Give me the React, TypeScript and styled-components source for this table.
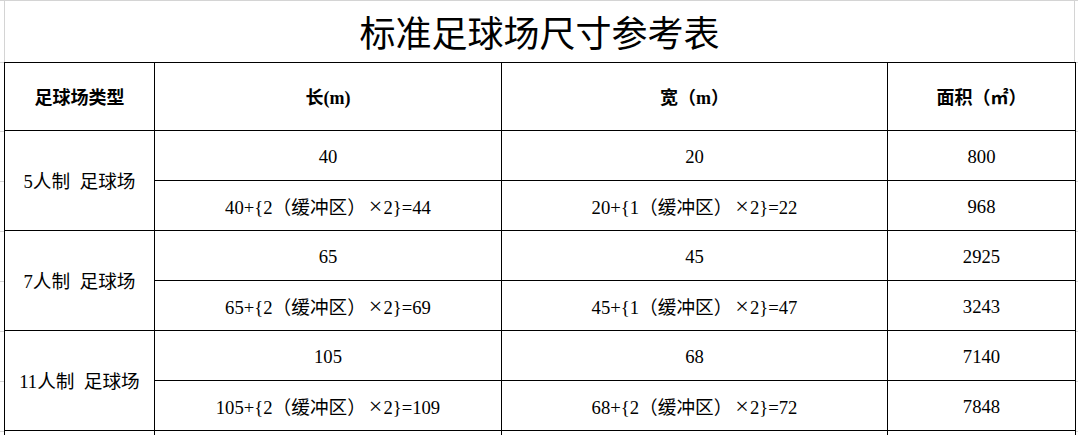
import styled, { createGlobalStyle } from "styled-components";

const GlobalStyle = createGlobalStyle`
  html, body {
    margin: 0;
    padding: 0;
    background: #fff;
  }
  body {
    font-family: "Liberation Serif", "Noto Sans CJK SC", serif;
    color: #000;
  }
`;

const grid = "#d4d4d4";

// gray spreadsheet gridline stubs in the gutters on either side of the table
const Sheet = styled.div`
  width: 1078px;
  height: 435px;
  overflow: hidden;
  border-top: 1px solid ${grid};
  box-sizing: border-box;
  padding-left: 4px;
  background:
    linear-gradient(${grid}, ${grid}) 0 61px / 4px 1px no-repeat,
    linear-gradient(${grid}, ${grid}) 1075px 61px / 3px 1px no-repeat,
    repeating-linear-gradient(to bottom, ${grid} 0 1px, transparent 1px 50px)
      0 130px / 4px 305px no-repeat,
    repeating-linear-gradient(to bottom, ${grid} 0 1px, transparent 1px 50px)
      1075px 130px / 3px 305px no-repeat;
`;

const Title = styled.div`
  width: 1071px;
  height: 61px;
  box-sizing: border-box;
  border-left: 1px solid ${grid};
  border-right: 1px solid ${grid};
  display: flex;
  align-items: center;
  justify-content: center;
  font-size: 36px;
  line-height: 1;
  padding-top: 6px;
`;

const Table = styled.table`
  width: 1071px;
  table-layout: fixed;
  border-collapse: collapse;
  font-size: 18.67px;
  line-height: 1.2;
`;

const HeadCell = styled.th`
  height: 68px;
  box-sizing: border-box;
  padding: 4px 0 0;
  border: 1px solid #000;
  font-weight: bold;
  font-size: 18px;
  text-align: center;
  vertical-align: middle;
`;

const Cell = styled.td`
  height: 50px;
  box-sizing: border-box;
  padding: 3px 0 0;
  border: 1px solid #000;
  text-align: center;
  vertical-align: middle;
  white-space: pre;
`;

const Times = styled.span`
  display: inline-block;
  font-size: 24px;
  line-height: 1;
  margin: 0 1px 0 3px;
`;

type Pitch = {
  type: string;
  rows: [string, string, string][];
};

const pitches: Pitch[] = [
  {
    type: "5人制  足球场",
    rows: [
      ["40", "20", "800"],
      ["40+{2（缓冲区）×2}=44", "20+{1（缓冲区）×2}=22", "968"],
    ],
  },
  {
    type: "7人制  足球场",
    rows: [
      ["65", "45", "2925"],
      ["65+{2（缓冲区）×2}=69", "45+{1（缓冲区）×2}=47", "3243"],
    ],
  },
  {
    type: "11人制  足球场",
    rows: [
      ["105", "68", "7140"],
      ["105+{2（缓冲区）×2}=109", "68+{2（缓冲区）×2}=72", "7848"],
    ],
  },
];

function Formula({ text }: { text: string }) {
  const parts = text.split("×");
  if (parts.length < 2) return <>{text}</>;
  return (
    <>
      {parts[0]}
      <Times>×</Times>
      {parts[1]}
    </>
  );
}

export default function App() {
  return (
    <>
      <GlobalStyle />
      <Sheet>
        <Title>标准足球场尺寸参考表</Title>
        <Table>
          <colgroup>
            <col style={{ width: 150 }} />
            <col style={{ width: 347 }} />
            <col style={{ width: 386 }} />
            <col style={{ width: 188 }} />
          </colgroup>
          <thead>
            <tr>
              <HeadCell>足球场类型</HeadCell>
              <HeadCell>长(m)</HeadCell>
              <HeadCell>宽（m）</HeadCell>
              <HeadCell>面积（㎡）</HeadCell>
            </tr>
          </thead>
          <tbody>
            {pitches.map((p) =>
              p.rows.map((r, i) => (
                <tr key={p.type + i}>
                  {i === 0 && <Cell rowSpan={2}>{p.type}</Cell>}
                  <Cell><Formula text={r[0]} /></Cell>
                  <Cell><Formula text={r[1]} /></Cell>
                  <Cell>{r[2]}</Cell>
                </tr>
              ))
            )}
            <tr>
              <Cell />
              <Cell />
              <Cell />
              <Cell />
            </tr>
          </tbody>
        </Table>
      </Sheet>
    </>
  );
}
